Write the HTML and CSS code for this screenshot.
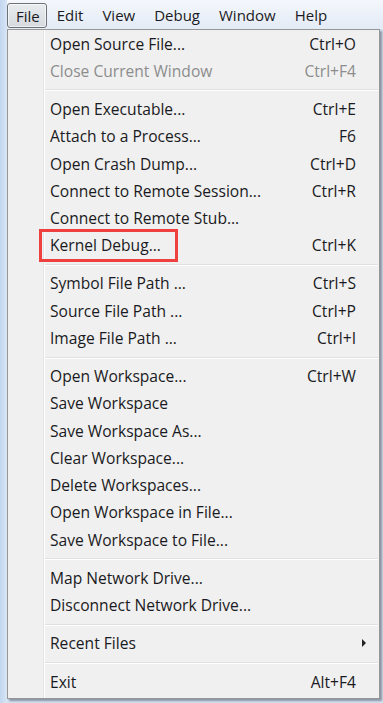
FILE: index.html
```html
<!DOCTYPE html>
<html>
<head>
<meta charset="utf-8">
<link rel="stylesheet" href="styles.css">
</head>
<body>
<div class="window">
  <div class="frame"></div>
  <div class="main">
    <div class="menubar">
      <div class="mb-item active">File</div>
      <div class="mb-item">Edit</div>
      <div class="mb-item">View</div>
      <div class="mb-item">Debug</div>
      <div class="mb-item">Window</div>
      <div class="mb-item">Help</div>
    </div>
    <div class="popup">
      <div class="item"><span class="label">Open Source File...</span><span class="key">Ctrl+O</span></div>
      <div class="item disabled"><span class="label">Close Current Window</span><span class="key">Ctrl+F4</span></div>
      <div class="sep"></div>
      <div class="item"><span class="label">Open Executable...</span><span class="key">Ctrl+E</span></div>
      <div class="item"><span class="label">Attach to a Process...</span><span class="key">F6</span></div>
      <div class="item"><span class="label">Open Crash Dump...</span><span class="key">Ctrl+D</span></div>
      <div class="item"><span class="label">Connect to Remote Session...</span><span class="key">Ctrl+R</span></div>
      <div class="item"><span class="label">Connect to Remote Stub...</span><span class="key"></span></div>
      <div class="item"><span class="label marked">Kernel Debug...</span><span class="key">Ctrl+K</span></div>
      <div class="sep"></div>
      <div class="item"><span class="label">Symbol File Path ...</span><span class="key">Ctrl+S</span></div>
      <div class="item"><span class="label">Source File Path ...</span><span class="key">Ctrl+P</span></div>
      <div class="item"><span class="label">Image File Path ...</span><span class="key">Ctrl+I</span></div>
      <div class="sep"></div>
      <div class="item"><span class="label">Open Workspace...</span><span class="key">Ctrl+W</span></div>
      <div class="item"><span class="label">Save Workspace</span><span class="key"></span></div>
      <div class="item"><span class="label">Save Workspace As...</span><span class="key"></span></div>
      <div class="item"><span class="label">Clear Workspace...</span><span class="key"></span></div>
      <div class="item"><span class="label">Delete Workspaces...</span><span class="key"></span></div>
      <div class="item"><span class="label">Open Workspace in File...</span><span class="key"></span></div>
      <div class="item"><span class="label">Save Workspace to File...</span><span class="key"></span></div>
      <div class="sep"></div>
      <div class="item"><span class="label">Map Network Drive...</span><span class="key"></span></div>
      <div class="item"><span class="label">Disconnect Network Drive...</span><span class="key"></span></div>
      <div class="sep"></div>
      <div class="item"><span class="label">Recent Files</span><span class="arrow"></span></div>
      <div class="sep"></div>
      <div class="item"><span class="label">Exit</span><span class="key">Alt+F4</span></div>
    </div>
  </div>
</div>
</body>
</html>
```

FILE: styles.css
```css
html, body {
  margin: 0;
  padding: 0;
  background: #d4e3f5;
}
body {
  width: 383px;
  height: 703px;
  overflow: hidden;
  font-family: "Open Sans", "Noto Sans", sans-serif;
  font-size: 14px;
  color: #1a1a22;
}
.window {
  display: flex;
  height: 703px;
}
.frame {
  width: 7px;
  flex: none;
  background: linear-gradient(to right, #c2d6ee, #d9e6f6);
}
.main {
  flex: 1;
  display: flex;
  flex-direction: column;
}
.menubar {
  height: 29px;
  display: flex;
  align-items: center;
  background: linear-gradient(to bottom, #f4f7fc, #e3ebf6);
  box-sizing: border-box;
  padding-top: 2px;
}
.mb-item {
  padding: 0 9px;
  height: 25px;
  line-height: 24px;
  box-sizing: border-box;
  font-size: 15px;
  margin-right: 1px;
}
.mb-item.active {
  border: 1px solid #6e7277;
  border-radius: 3px;
  background: linear-gradient(to bottom, #e9ecef, #d6dade);
  padding: 0 6px 0 8px;
  box-shadow: inset 0 0 0 1px rgba(255,255,255,0.6);
}
.popup {
  width: 373px;
  height: 670px;
  box-sizing: border-box;
  border: 1px solid #979797;
  background-color: #f0f0f0;
  background-image: linear-gradient(to right, transparent 35px, #e2e3e3 35px, #e2e3e3 36px, #ffffff 36px, #ffffff 37px, transparent 37px);
  box-shadow: 2px 2px 2px rgba(0,0,0,0.35);
}
.item {
  height: 27.24px;
  display: flex;
  align-items: center;
  justify-content: space-between;
  padding: 0 23px 0 42px;
  font-size: 15.6px;
}
.item.disabled {
  color: #8d8d8d;
}
.label {
  position: relative;
}
.marked::after {
  content: "";
  position: absolute;
  left: -11px;
  right: -17px;
  top: -5px;
  bottom: -6px;
  border: 3px solid #ef4040;
}
.sep {
  height: 11px;
  margin-left: 37px;
  margin-right: 1px;
  background: linear-gradient(to bottom, transparent 5px, #e0e0e0 5px, #e0e0e0 6px, #ffffff 6px, #ffffff 7px, transparent 7px);
}
.arrow {
  width: 0;
  height: 0;
  border-top: 4px solid transparent;
  border-bottom: 4px solid transparent;
  border-left: 4px solid #222;
  margin-right: -10px;
}
```
